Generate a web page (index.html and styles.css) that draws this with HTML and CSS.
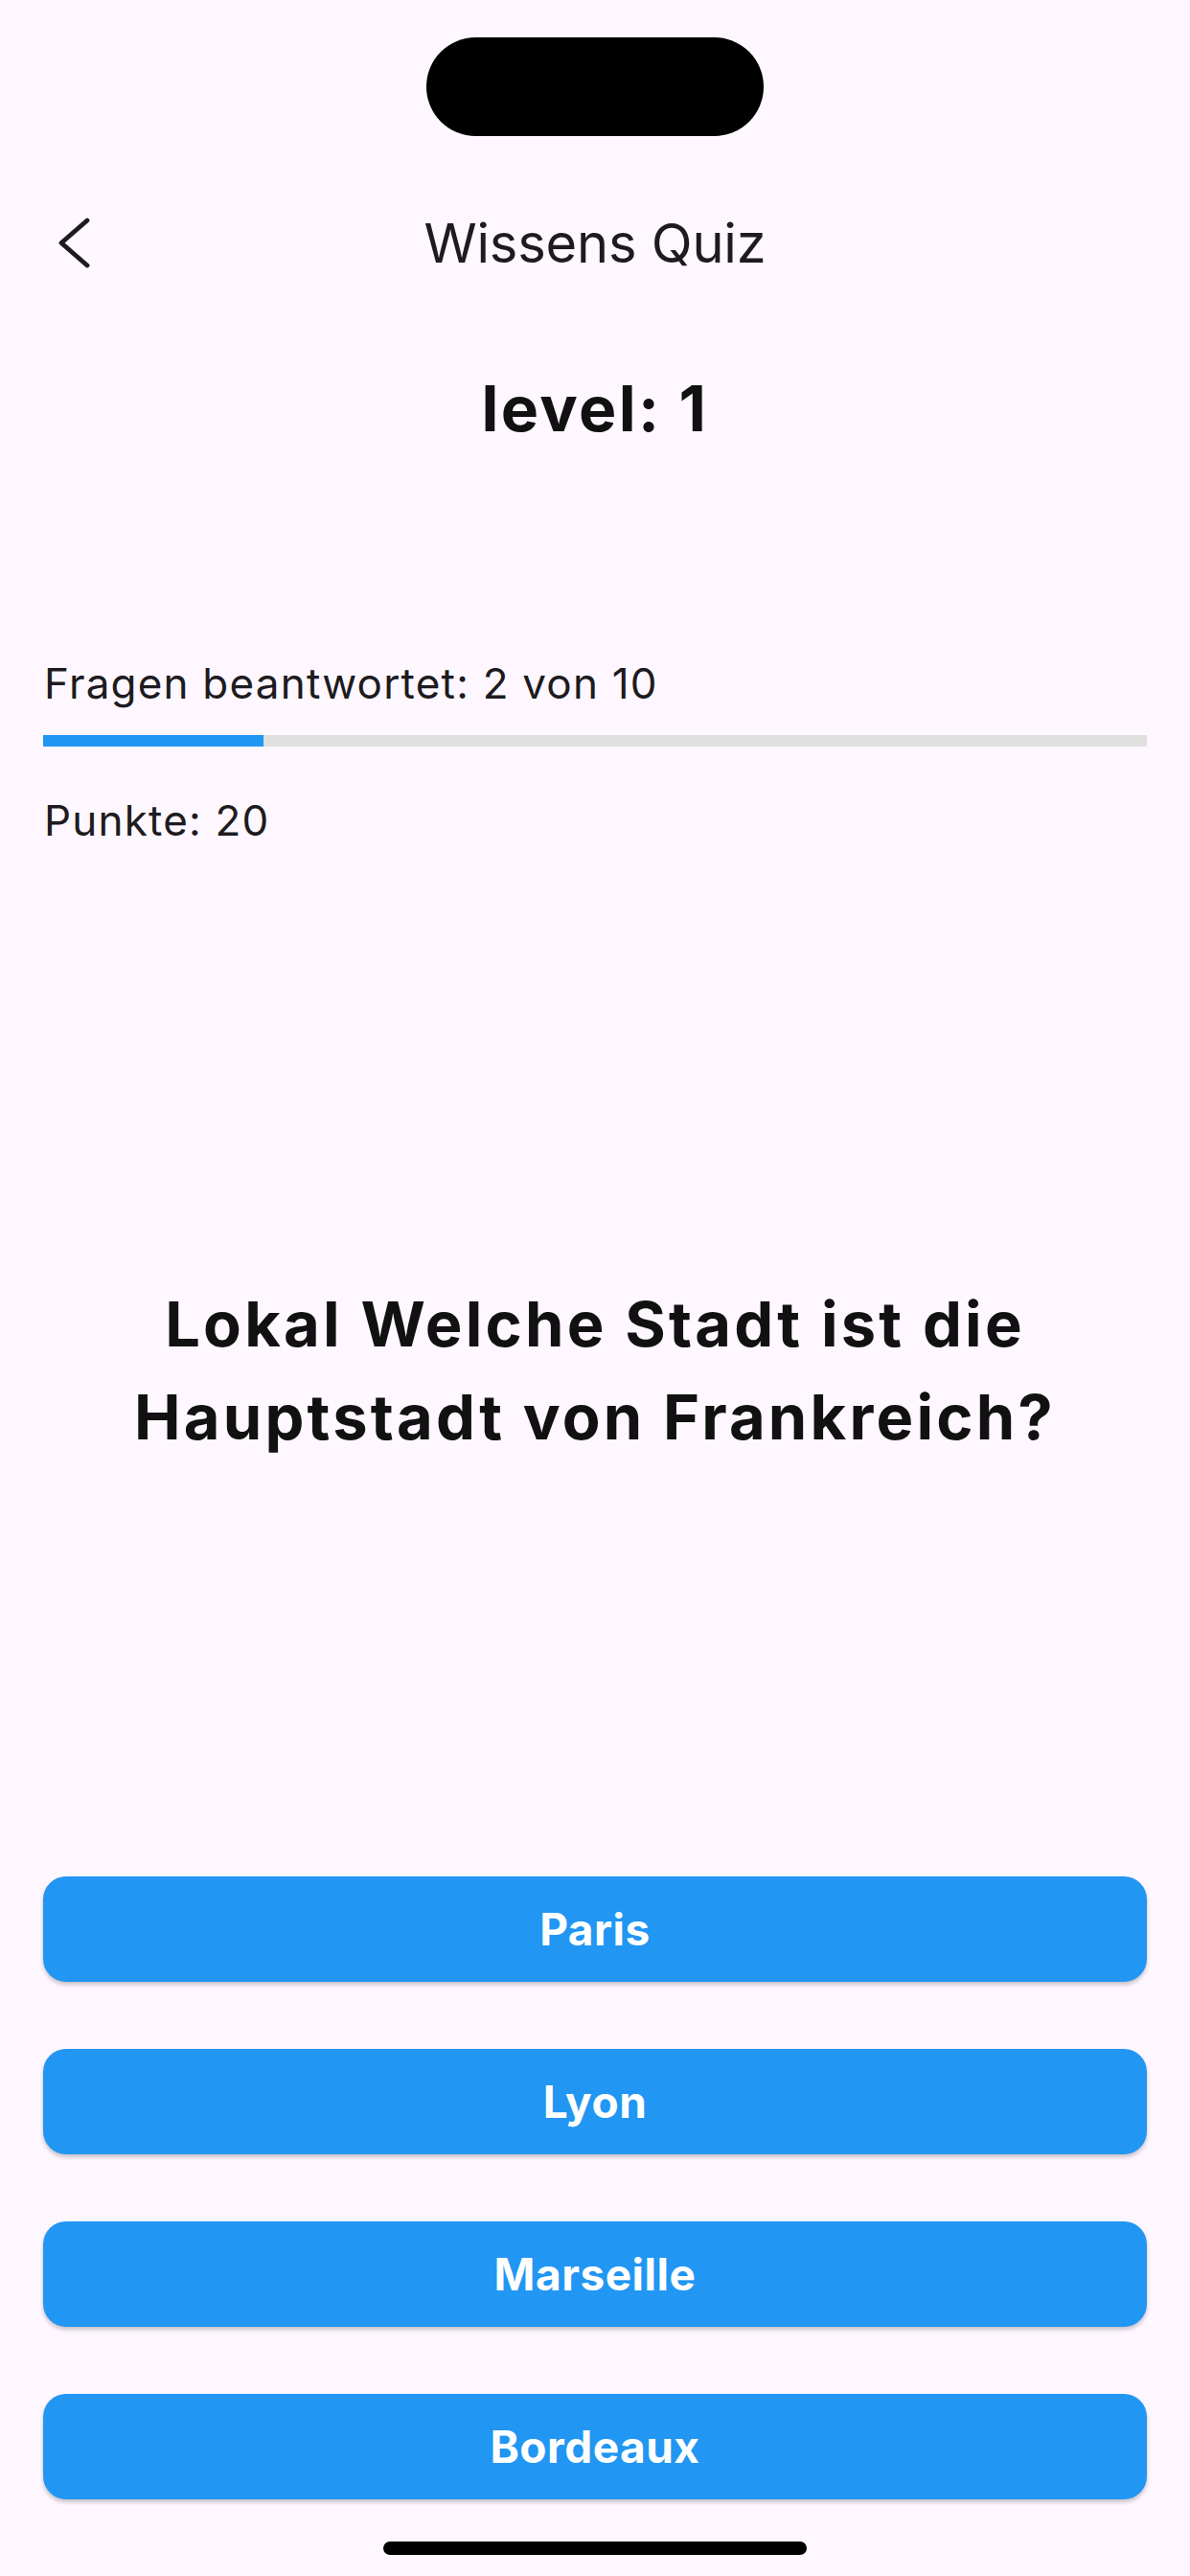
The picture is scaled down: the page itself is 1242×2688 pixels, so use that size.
FILE: index.html
```html
<!DOCTYPE html>
<html lang="de">
<head>
<meta charset="utf-8">
<title>Wissens Quiz</title>
<link rel="stylesheet" href="styles.css">
</head>
<body>
<div class="screen">
  <div class="status">
    <div class="island"></div>
  </div>
  <header class="appbar">
    <div class="appbar-left">
      <svg class="back" width="40" height="60" viewBox="0 0 40 60" aria-hidden="true">
        <path d="M33 6 L6 29.5 L33 53" fill="none" stroke="#1D1B20" stroke-width="4.8" stroke-linecap="round" stroke-linejoin="round"/>
      </svg>
    </div>
    <h1 class="title">Wissens Quiz</h1>
    <div class="appbar-right"></div>
  </header>
  <main class="content">
    <h2 class="level">level: 1</h2>
    <p class="info info-answered">Fragen beantwortet: 2 von 10</p>
    <div class="progress"><div class="progress-fill" style="width: 20%"></div></div>
    <p class="info info-points">Punkte: 20</p>
    <p class="question">Lokal Welche Stadt ist die Hauptstadt von Frankreich?</p>
    <div class="answers">
      <button class="answer">Paris</button>
      <button class="answer">Lyon</button>
      <button class="answer">Marseille</button>
      <button class="answer">Bordeaux</button>
    </div>
  </main>
  <div class="home-indicator"></div>
</div>
</body>
</html>
```

FILE: styles.css
```css
* { box-sizing: border-box; }
html, body {
  margin: 0;
  padding: 0;
  background: #FEF7FF;
}
body {
  width: 1242px;
  height: 2688px;
  overflow: hidden;
  font-family: Inter, "Noto Sans", "Liberation Sans", sans-serif;
  color: #1D1B20;
}
.screen {
  width: 1242px;
  height: 2688px;
  display: flex;
  flex-direction: column;
}
.status {
  height: 170px;
  padding-top: 39px;
  display: flex;
  justify-content: center;
}
.island {
  width: 352px;
  height: 103px;
  border-radius: 52px;
  background: #000;
}
.appbar {
  height: 168px;
  display: grid;
  grid-template-columns: 1fr auto 1fr;
  align-items: center;
}
.appbar-left {
  padding-left: 58px;
  display: flex;
  align-items: center;
}
.back { display: block; }
.title {
  margin: 0;
  font-weight: 400;
  font-size: 56px;
  line-height: 168px;
  letter-spacing: -0.2px;
  color: #1D1B20;
}
.content {
  padding: 0 45px;
  display: flex;
  flex-direction: column;
}
.level {
  margin: 48px 0 0;
  text-align: center;
  font-size: 66px;
  font-weight: 700;
  line-height: 80px;
  letter-spacing: 2.4px;
  color: #111;
}
.info {
  margin: 0;
  font-size: 44px;
  line-height: 54px;
  letter-spacing: 1.2px;
  padding-left: 1px;
  color: #1D1B20;
}
.info-answered { margin-top: 220px; }
.progress {
  margin-top: 27px;
  height: 12px;
  background: #E0E0E0;
}
.progress-fill {
  height: 100%;
  background: #2196F3;
}
.info-points { margin-top: 50px; }
.question {
  margin: 450px 0 0;
  text-align: center;
  font-size: 65px;
  font-weight: 700;
  line-height: 97px;
  letter-spacing: 3.2px;
  color: #111;
}
.answers {
  margin-top: 431px;
  display: flex;
  flex-direction: column;
  gap: 70px;
}
.answer {
  height: 110px;
  border: none;
  border-radius: 24px;
  background: #2196F3;
  color: #fff;
  font-family: Inter, "Noto Sans", "Liberation Sans", sans-serif;
  font-size: 46px;
  font-weight: 650;
  letter-spacing: 0.5px;
  box-shadow: 0 3px 4px rgba(0, 0, 0, 0.22);
  padding: 0;
}
.home-indicator {
  align-self: center;
  margin-top: 44px;
  width: 442px;
  height: 14px;
  border-radius: 7px;
  background: #000;
}
```
